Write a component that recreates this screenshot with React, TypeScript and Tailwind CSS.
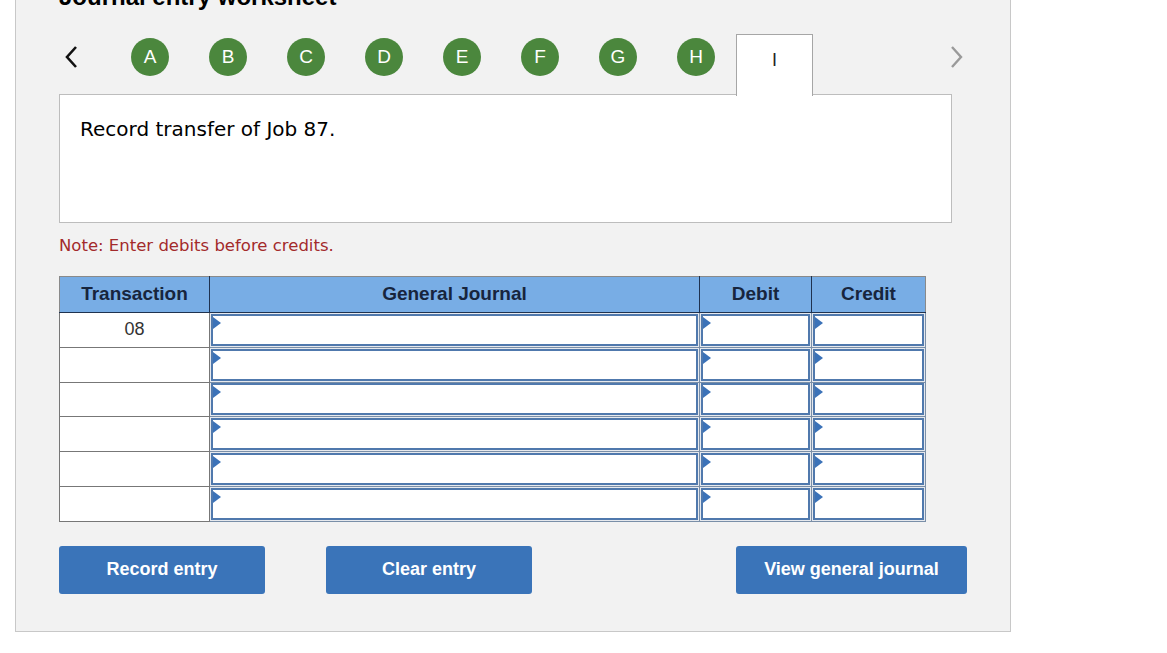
import React from 'react';

const steps = ['A', 'B', 'C', 'D', 'E', 'F', 'G', 'H'];

function Flag() {
  return (
    <svg className="absolute left-0 top-[1px]" width="8" height="12" viewBox="0 0 8 12">
      <polygon points="0,0 8,6 0,12" fill="#3b72b8" />
    </svg>
  );
}

function InputCell({ w }: { w: string }) {
  return (
    <td className={`p-0 ${w} h-[34.8px] border-l border-r border-[#7a8fa8] bg-[#e6e9ee]`}>
      <div className="relative h-[32px] mx-[1px] border-2 border-[#5079ad] bg-white">
        <Flag />
      </div>
    </td>
  );
}

export default function App() {
  const rows = [0, 1, 2, 3, 4, 5];

  return (
    <div className="min-h-screen bg-white overflow-hidden" style={{ fontFamily: '"Liberation Sans", Arial, sans-serif' }}>
      <div className="ml-[15px] w-[996px] -mt-[22px] border border-[#c8c8c8] bg-[#f2f2f2] pl-[43px] pb-[37px]">
        <h1 className="pt-[4px] text-[24px] leading-[28px] font-bold text-black">Journal entry worksheet</h1>

        {/* step navigation */}
        <div className="mt-[23px] h-[61px] flex items-start relative z-10">
          <div className="w-[72px] h-[46px] flex items-center">
            <svg width="14" height="24" viewBox="0 0 14 24" className="ml-[5px]">
              <polyline points="12,2 3,12 12,22" fill="none" stroke="#111" strokeWidth="2.6" />
            </svg>
          </div>
          <div className="flex gap-[40px] pt-[4px]">
            {steps.map((s) => (
              <div key={s} className="w-[38px] h-[38px] rounded-full bg-[#4b873d] text-white flex items-center justify-center text-[19px]">
                {s}
              </div>
            ))}
          </div>
          <div className="ml-[21px] w-[77px] h-[62px] border border-b-0 border-[#a6a6a6] bg-white flex justify-center pt-[12px] text-[18px] text-[#222]">
            I
          </div>
          <div className="ml-[137px] h-[46px] flex items-center">
            <svg width="14" height="24" viewBox="0 0 14 24">
              <polyline points="2,2 11,12 2,22" fill="none" stroke="#9a9a9a" strokeWidth="2.4" />
            </svg>
          </div>
        </div>

        {/* prompt box */}
        <div
          className="-mt-[1px] w-[893px] h-[129px] border border-[#bdbdbd] bg-white pl-[20px] pt-[21px] text-[20px] leading-[26px] text-black"
          style={{ fontFamily: 'Verdana, "DejaVu Sans", sans-serif' }}
        >
          Record transfer of Job 87.
        </div>

        <p
          className="mt-[13px] text-[16.5px] leading-[20px] text-[#a32a2b]"
          style={{ fontFamily: 'Verdana, "DejaVu Sans", sans-serif' }}
        >
          Note: Enter debits before credits.
        </p>

        {/* journal table */}
        <table className="mt-[20px] border-collapse border border-[#8a8a8a]">
          <thead>
            <tr className="bg-[#78ade5] text-[#17253d] text-[19px] font-bold h-[36px]">
              <th className="w-[150px] border-r border-b border-[#1f324f] font-bold">Transaction</th>
              <th className="w-[490px] border-r border-b border-[#1f324f] font-bold">General Journal</th>
              <th className="w-[112px] border-r border-b border-[#1f324f] font-bold">Debit</th>
              <th className="w-[114px] border-b border-[#1f324f] font-bold">Credit</th>
            </tr>
          </thead>
          <tbody>
            {rows.map((r) => (
              <tr key={r} className="border-b border-[#7a8fa8]">
                <td className="w-[150px] h-[34.8px] p-0 border border-[#777] bg-white text-center text-[18px] text-[#333]">
                  {r === 0 ? '08' : ''}
                </td>
                <InputCell w="w-[490px]" />
                <InputCell w="w-[112px]" />
                <InputCell w="w-[114px]" />
              </tr>
            ))}
          </tbody>
        </table>

        {/* actions */}
        <div className="mt-[24px] flex">
          <button className="w-[206px] h-[48px] rounded-[3px] bg-[#3a74b9] text-white text-[18px] font-bold">Record entry</button>
          <button className="ml-[61px] w-[206px] h-[48px] rounded-[3px] bg-[#3a74b9] text-white text-[18px] font-bold">Clear entry</button>
          <button className="ml-[204px] w-[231px] h-[48px] rounded-[3px] bg-[#3a74b9] text-white text-[18px] font-bold">View general journal</button>
        </div>
      </div>
    </div>
  );
}
